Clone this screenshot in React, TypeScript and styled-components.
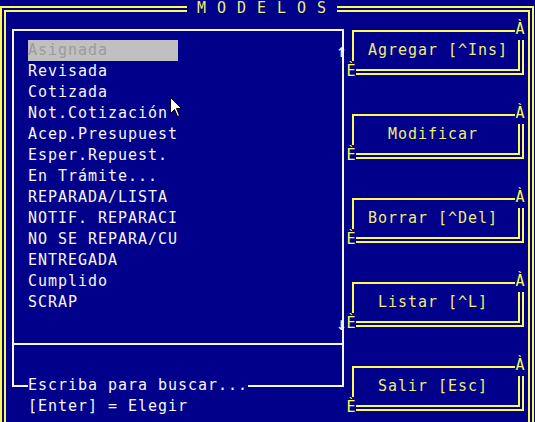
import styled, { createGlobalStyle, css } from "styled-components";

const NAVY = "#00008a";
const LINE = "#fcfc54";
const GOLD = "#f0ec78";
const WHITE = "#f6f6f6";

const GlobalStyle = createGlobalStyle`
  html, body {
    margin: 0;
    padding: 0;
    background: ${NAVY};
  }
`;

// one text-mode cell: 10px wide, 21px tall
const cell = css`
  font-family: "DejaVu Sans Mono", "Liberation Mono", monospace;
  font-size: 15px;
  letter-spacing: 0.97px;
  line-height: 21px;
  white-space: pre;
`;

const Screen = styled.div`
  position: relative;
  width: 535px;
  height: 422px;
  overflow: hidden;
  background: ${NAVY};
  ${cell};
`;

const OuterFrame = styled.div`
  margin-top: 6px;
  width: 534px;
  box-sizing: border-box;
  border: 2px solid ${LINE};
  padding: 2px;
`;

const InnerFrame = styled.div`
  border: 2px solid ${LINE};
  height: 440px;
  display: flex;
  align-items: flex-start;
`;

const Title = styled.div`
  position: absolute;
  top: -2px;
  left: 187px;
  background: ${NAVY};
  color: ${GOLD};
`;

const LeftPane = styled.div`
  flex: none;
  width: 332px;
  margin: 17px 0 0 6px;
  color: ${WHITE};
`;

const Panel = styled.div`
  position: relative;
  border: 2px solid ${WHITE};
  border-bottom: none;
`;

const ListArea = styled.div`
  height: 303px;
  padding: 9px 0 0 14px;
  border-bottom: 2px solid ${WHITE};
`;

const Item = styled.div<{ $selected?: boolean }>`
  width: 150px;
  height: 21px;
  color: ${(p) => (p.$selected ? "#9c9c9c" : WHITE)};
  background: ${(p) => (p.$selected ? "#c0c0c0" : "transparent")};
`;

const SearchArea = styled.div`
  height: 30px;
`;

const ScrollMark = styled.span<{ $top: number }>`
  position: absolute;
  right: -4px;
  top: ${(p) => p.$top}px;
  width: 10px;
  text-align: center;
  font-size: 18px;
  letter-spacing: 0;
  color: #fff0ff;
`;

const BottomRow = styled.div`
  display: flex;
  height: 21px;

  &::before {
    content: "";
    width: 14px;
    height: 10px;
    border-left: 2px solid ${WHITE};
    border-bottom: 2px solid ${WHITE};
  }

  &::after {
    content: "";
    flex: 1;
    height: 10px;
    border-right: 2px solid ${WHITE};
    border-bottom: 2px solid ${WHITE};
  }
`;

const Hint = styled.div`
  padding-left: 16px;
`;

const ButtonColumn = styled.div`
  flex: none;
  display: flex;
  flex-direction: column;
  gap: 39px;
  margin: 18px 0 0 8px;
`;

const MenuButton = styled.button<{ $pad: number }>`
  position: relative;
  display: flex;
  align-items: flex-start;
  width: 172px;
  height: 45px;
  box-sizing: border-box;
  margin: 0;
  padding: 8px 0 0 ${(p) => 4 + p.$pad * 10}px;
  background: transparent;
  color: ${GOLD};
  border-top: 2px solid ${LINE};
  border-left: 2px solid ${LINE};
  border-right: 6px double ${LINE};
  border-bottom: 6px double ${LINE};
  border-radius: 0;
  cursor: default;
  ${cell};

  &::before,
  &::after {
    position: absolute;
    width: 10px;
    height: 21px;
    text-align: center;
    letter-spacing: 0;
    background: ${NAVY};
    color: ${LINE};
  }

  &::before {
    content: "À";
    top: -13px;
    right: -7px;
  }

  &::after {
    content: "È";
    top: 29px;
    left: -8px;
  }
`;

const Pointer = styled.svg`
  position: absolute;
  left: 170px;
  top: 97px;
`;

const items = [
  "Asignada",
  "Revisada",
  "Cotizada",
  "Not.Cotización",
  "Acep.Presupuest",
  "Esper.Repuest.",
  "En Trámite...",
  "REPARADA/LISTA",
  "NOTIF. REPARACI",
  "NO SE REPARA/CU",
  "ENTREGADA",
  "Cumplido",
  "SCRAP",
];

const buttons = [
  "Agregar [^Ins]",
  "Modificar",
  "Borrar [^Del]",
  "Listar [^L]",
  "Salir [Esc]",
];

export default function App() {
  return (
    <>
      <GlobalStyle />
      <Screen>
        <OuterFrame>
          <InnerFrame>
            <LeftPane>
              <Panel>
                <ListArea>
                  {items.map((name, i) => (
                    <Item key={name} $selected={i === 0}>
                      {name}
                    </Item>
                  ))}
                </ListArea>
                <SearchArea />
                <ScrollMark $top={9}>↑</ScrollMark>
                <ScrollMark $top={282}>↓</ScrollMark>
              </Panel>
              <BottomRow>Escriba para buscar...</BottomRow>
              <Hint>[Enter] = Elegir</Hint>
            </LeftPane>
            <ButtonColumn>
              {buttons.map((label) => (
                <MenuButton
                  key={label}
                  $pad={Math.floor((16 - label.length) / 2)}
                >
                  {label}
                </MenuButton>
              ))}
            </ButtonColumn>
          </InnerFrame>
        </OuterFrame>
        <Title> M O D E L O S </Title>
        <Pointer width="13" height="21" viewBox="0 0 13 21">
          <path
            d="M0.5 0.5 L0.5 16.5 L4.5 12.5 L7.5 19.5 L9.5 18.5 L6.5 11.5 L11.5 11.5 Z"
            fill="#ffffff"
            stroke="#000000"
            strokeWidth="1"
          />
        </Pointer>
      </Screen>
    </>
  );
}
